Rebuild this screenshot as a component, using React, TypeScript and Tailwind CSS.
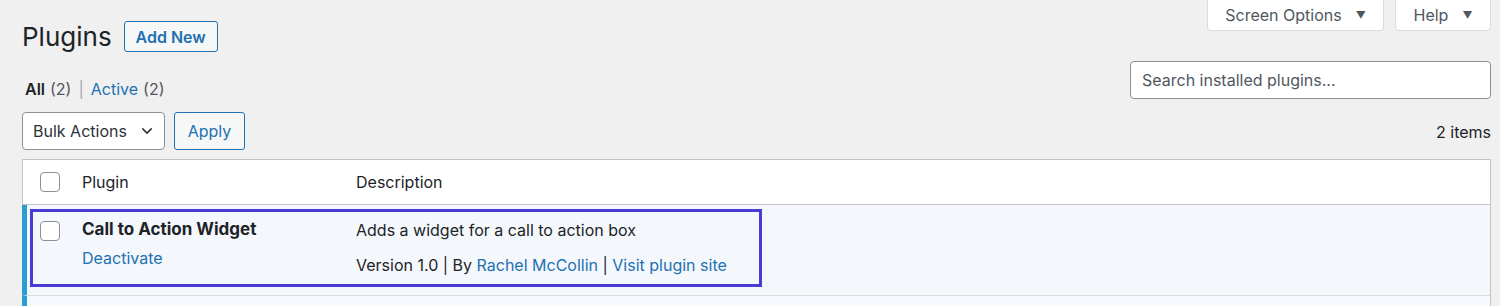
import React from 'react'

const font = { fontFamily: 'Inter, "Noto Sans", sans-serif' }

const Checkbox: React.FC = () => (
  <div className="h-5 w-5 rounded-[4px] border border-[#8c8f94] bg-white" />
)

const Tab: React.FC<{ label: string; className?: string }> = ({ label, className }) => (
  <div
    className={`flex h-[31px] items-center justify-center gap-[14px] rounded-b-[4px] border border-t-0 border-[#dcdcde] bg-white text-[16px] text-[#50575e] ${className ?? ''}`}
  >
    <span>{label}</span>
    <span className="text-[10px] leading-none">▼</span>
  </div>
)

export default function App() {
  return (
    <div className="min-h-screen bg-[#f0f0f1] pl-[22px] pr-[9px] text-[#1d2327]" style={font}>
      {/* Heading + screen meta tabs */}
      <div className="flex items-start justify-between">
        <div className="flex items-center gap-3 pt-[21px]">
          <h1 className="text-[26px] leading-[31px] font-normal text-[#1d2327]">Plugins</h1>
          <button className="h-[31px] w-[94px] rounded-[3px] border border-[#2271b1] bg-[#f6f7f7] text-[16px] font-semibold text-[#2271b1]">
            Add New
          </button>
        </div>
        <div className="flex gap-[11px]">
          <Tab label="Screen Options" className="w-[177px]" />
          <Tab label="Help" className="w-[96px]" />
        </div>
      </div>

      {/* Views + search */}
      <div className="mt-[9px] flex items-end justify-between">
        <div className="flex h-5 items-center pl-[3px] text-[16px] leading-5">
          <span className="font-semibold text-[#1d2327]">All</span>
          <span className="ml-[5px] text-[#50575e]">(2)</span>
          <span className="mx-[7px] text-[#a7aaad]">|</span>
          <span className="text-[#2271b1]">Active</span>
          <span className="ml-[5px] text-[#50575e]">(2)</span>
        </div>
        <div className="flex h-[38px] w-[361px] items-center rounded-[4px] border border-[#8c8f94] bg-white pl-[11px] text-[16px] text-[#50575e]">
          Search installed plugins...
        </div>
      </div>

      {/* Bulk actions */}
      <div className="mt-[13px] flex items-center justify-between">
        <div className="flex gap-[9px]">
          <div className="flex h-[38px] w-[143px] items-center justify-between rounded-[4px] border border-[#8c8f94] bg-white pl-[10px] pr-[10px] text-[16px] text-[#2c3338]">
            <span>Bulk Actions</span>
            <svg width="14" height="14" viewBox="0 0 20 20" fill="none" stroke="#2c3338" strokeWidth="2.2">
              <path d="M4 7l6 6 6-6" strokeLinecap="round" strokeLinejoin="round" />
            </svg>
          </div>
          <button className="h-[38px] w-[71px] rounded-[3px] border border-[#2271b1] bg-[#f6f7f7] text-[16px] text-[#2271b1]">
            Apply
          </button>
        </div>
        <div className="pt-[2px] text-[16px] text-[#1d2327]">2 items</div>
      </div>

      {/* Plugins table */}
      <div className="mt-[9px] border border-[#c3c4c7] bg-white">
        <div className="flex h-[45px] items-center border-b border-[#c3c4c7] text-[16px] text-[#1d2327]">
          <div className="w-[59px] pl-[17px]">
            <Checkbox />
          </div>
          <div className="w-[274px]">Plugin</div>
          <div>Description</div>
        </div>

        <div className="relative -ml-px flex h-[91px] border-b border-[#dcdcde] border-l-[5px] border-l-[#2a9dd3] bg-[#f4f8fc] text-[16px]">
          <div className="w-[55px] pl-[13px] pt-[16px]">
            <Checkbox />
          </div>
          <div className="w-[274px] pt-[14px]">
            <div className="text-[17px] font-bold leading-5 text-[#1d2327]">Call to Action Widget</div>
            <div className="mt-[9px] leading-5 text-[#2271b1]">Deactivate</div>
          </div>
          <div className="pt-[15px]">
            <div className="leading-5 text-[#1d2327]">Adds a widget for a call to action box</div>
            <div className="mt-[15px] leading-5 text-[#1d2327]">
              Version 1.0 | By <span className="text-[#2271b1]">Rachel McCollin</span> |{' '}
              <span className="text-[#2271b1]">Visit plugin site</span>
            </div>
          </div>
          {/* highlight annotation */}
          <div className="pointer-events-none absolute left-[3px] top-[4px] h-[78px] w-[732px] border-[3px] border-[#4a3ad6]" />
        </div>

        <div className="-ml-px h-[60px] border-l-[5px] border-l-[#2a9dd3] bg-[#f6f9fd]" />
      </div>
    </div>
  )
}
